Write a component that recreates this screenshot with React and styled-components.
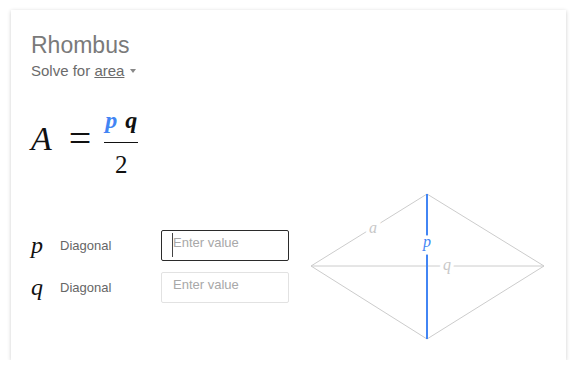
import styled, { createGlobalStyle } from "styled-components";

const GlobalStyle = createGlobalStyle`
  body {
    margin: 0;
    background: #ffffff;
    font-family: "Liberation Sans", Arial, sans-serif;
  }
`;

const App = () => {
  return (
    <>
      <GlobalStyle />
      <StyledCard>
        <StyledTitle>Rhombus</StyledTitle>
        <StyledSolve>
          Solve for <span>area</span>
          <StyledArrow />
        </StyledSolve>

        <StyledFormula>
          <StyledVar>A</StyledVar>
          <StyledEquals>=</StyledEquals>
          <StyledFraction>
            <StyledNumerator>
              <StyledMathVar $blue>p</StyledMathVar>
              <StyledMathVar>q</StyledMathVar>
            </StyledNumerator>
            <StyledDenominator>2</StyledDenominator>
          </StyledFraction>
        </StyledFormula>

        <StyledBottom>
          <StyledInputs>
            <StyledRow>
              <StyledSymbol>p</StyledSymbol>
              <StyledLabel>Diagonal</StyledLabel>
              <StyledField>
                <StyledInput $focused placeholder="Enter value" />
                <StyledCaret />
              </StyledField>
            </StyledRow>
            <StyledRow>
              <StyledSymbol>q</StyledSymbol>
              <StyledLabel>Diagonal</StyledLabel>
              <StyledField>
                <StyledInput placeholder="Enter value" />
              </StyledField>
            </StyledRow>
          </StyledInputs>

          <StyledDiagram width="256" height="160" viewBox="0 0 256 160">
            <g stroke="#cccccc" strokeWidth="1" fill="none">
              <polygon points="11,80 127,8 244,80 127,153" />
              <line x1="11" y1="80" x2="244" y2="80" />
            </g>
            <line x1="127" y1="8" x2="127" y2="153" stroke="#4285f4" strokeWidth="2" />
            <g
              fontFamily="'Liberation Serif', 'Times New Roman', serif"
              fontStyle="italic"
              fontSize="16"
              textAnchor="middle"
              stroke="#ffffff"
              strokeWidth="7"
              paintOrder="stroke"
            >
              <text x="73" y="47" fill="#c8c8c8">a</text>
              <text x="147" y="84" fill="#c8c8c8">q</text>
              <text x="127" y="61" fill="#4285f4">p</text>
            </g>
          </StyledDiagram>
        </StyledBottom>
      </StyledCard>
    </>
  );
};

const StyledCard = styled.div`
  box-sizing: border-box;
  width: 555px;
  margin: 10px 0 0 11px;
  padding: 22px 20px 14px 20px;
  background: #ffffff;
  box-shadow: 0 1px 4px rgba(0, 0, 0, 0.2);
`;

const StyledTitle = styled.div`
  font-size: 23px;
  line-height: 26px;
  color: #7a7a7a;
`;

const StyledSolve = styled.div`
  margin-top: 4px;
  display: flex;
  align-items: center;
  font-size: 15px;
  line-height: 17px;
  color: #6b6b6b;
  white-space: pre;
  & > span {
    text-decoration: underline;
  }
`;

const StyledArrow = styled.i`
  margin-left: 6px;
  width: 0;
  height: 0;
  border-left: 3.5px solid transparent;
  border-right: 3.5px solid transparent;
  border-top: 4px solid #888888;
`;

const StyledFormula = styled.div`
  display: flex;
  align-items: center;
  margin-top: 18px;
  font-family: "Liberation Serif", "Times New Roman", serif;
  color: #111111;
`;

const StyledVar = styled.span`
  font-size: 34px;
  font-style: italic;
  line-height: 40px;
`;

const StyledEquals = styled.span`
  font-size: 40px;
  line-height: 40px;
  margin: 0 13px 0 17px;
`;

const StyledFraction = styled.div`
  display: flex;
  flex-direction: column;
  align-items: center;
  margin-top: 8px;
`;

const StyledNumerator = styled.div`
  display: flex;
  gap: 8px;
  font-size: 24px;
  line-height: 30px;
  padding: 0 1px 7px;
  border-bottom: 1.5px solid #111111;
  font-weight: bold;
`;

const StyledMathVar = styled.span`
  font-style: italic;
  color: ${(p) => (p.$blue ? "#4285f4" : "#111111")};
`;

const StyledDenominator = styled.div`
  font-size: 25px;
  line-height: 30px;
  padding-top: 7px;
`;

const StyledBottom = styled.div`
  display: flex;
  align-items: center;
  margin-top: 6px;
`;

const StyledInputs = styled.div`
  display: flex;
  flex-direction: column;
  gap: 11px;
`;

const StyledRow = styled.div`
  display: flex;
  align-items: center;
`;

const StyledSymbol = styled.span`
  width: 29px;
  font-family: "Liberation Serif", "Times New Roman", serif;
  font-style: italic;
  font-size: 24px;
  color: #111111;
`;

const StyledLabel = styled.span`
  width: 101px;
  font-size: 13px;
  color: #666666;
`;

const StyledField = styled.div`
  position: relative;
`;

const StyledInput = styled.input`
  box-sizing: border-box;
  display: block;
  width: 128px;
  height: 31px;
  padding: 0 10px 6px 11px;
  font-family: "Liberation Sans", Arial, sans-serif;
  font-size: 13px;
  border: 1px solid ${(p) => (p.$focused ? "#2b2b2b" : "#e2e2e2")};
  border-radius: 2px;
  outline: none;
  caret-color: transparent;
  &::placeholder {
    color: #a8a8a8;
  }
`;

const StyledCaret = styled.span`
  position: absolute;
  left: 11px;
  top: 3px;
  width: 1px;
  height: 24px;
  background: #444444;
`;

const StyledDiagram = styled.svg`
  margin-left: 11px;
  flex-shrink: 0;
`;

export default App;
